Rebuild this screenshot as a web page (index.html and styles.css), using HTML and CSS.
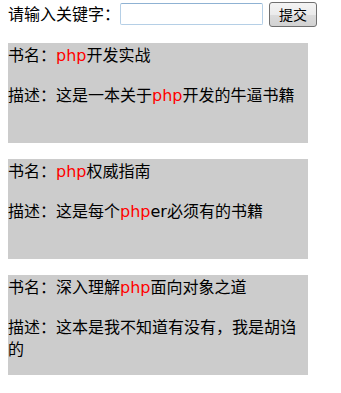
FILE: index.html
```html
<!DOCTYPE html>
<html lang="zh">
<head>
<meta charset="utf-8">
<title>搜索</title>
<link rel="stylesheet" href="styles.css">
</head>
<body>
<form class="search">
  <label class="search-label" for="kw">请输入关键字<span class="punct">：</span></label>
  <input class="search-input" id="kw" type="text">
  <button class="search-btn" type="button">提交</button>
</form>
<div class="books">
  <div class="book">
    <p class="book-title">书名<span class="punct">：</span><span class="hl">php</span>开发实战</p>
    <p class="book-desc">描述<span class="punct">：</span>这是一本关于<span class="hl">php</span>开发的牛逼书籍</p>
  </div>
  <div class="book">
    <p class="book-title">书名<span class="punct">：</span><span class="hl">php</span>权威指南</p>
    <p class="book-desc">描述<span class="punct">：</span>这是每个<span class="hl">php</span>er必须有的书籍</p>
  </div>
  <div class="book">
    <p class="book-title">书名<span class="punct">：</span>深入理解<span class="hl">php</span>面向对象之道</p>
    <p class="book-desc">描述<span class="punct">：</span>这本是我不知道有没有，我是胡诌的</p>
  </div>
</div>
</body>
</html>
```

FILE: styles.css
```css
html, body {
  background: #ffffff;
}
body {
  margin: 0 8px;
  font-family: "DejaVu Sans", "Noto Sans CJK SC", sans-serif;
  font-size: 16px;
  color: #000000;
}
.punct {
  font-family: "Noto Sans CJK JP", "Noto Sans CJK SC", sans-serif;
}
.search {
  display: flex;
  align-items: center;
  height: 26px;
  padding-top: 1px;
  margin: 0;
}
.search-label {
  line-height: 22px;
}
.search-input {
  box-sizing: border-box;
  width: 143px;
  height: 22px;
  margin: 0 6px 0 0;
  padding: 1px 3px;
  border: 1px solid #b5cfe6;
  border-top-color: #8fb2d3;
  border-radius: 2px;
  background: #ffffff;
  outline: none;
  font-size: 14px;
}
.search-btn {
  box-sizing: border-box;
  width: 48px;
  height: 25px;
  margin: 0;
  padding: 0;
  border: 1px solid #707070;
  border-radius: 3px;
  background: linear-gradient(#f4f4f4 0%, #ebebeb 50%, #dcdcdc 52%, #d2d2d2 100%);
  font-family: "Noto Sans CJK SC", sans-serif;
  font-size: 14px;
  color: #000000;
}
.books {
  margin-top: 16px;
}
.book {
  width: 300px;
  height: 100px;
  background: #cccccc;
  margin-bottom: 16px;
}
.book-title,
.book-desc {
  margin: 0;
  line-height: 22px;
}
.book-desc {
  margin-top: 16px;
}
.hl {
  color: #ff0000;
}
```
